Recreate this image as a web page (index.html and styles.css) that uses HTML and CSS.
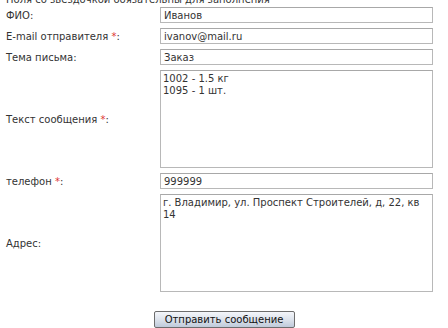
FILE: index.html
```html
<!DOCTYPE html>
<html>
<head>
	<meta charset="UTF-8">
	<title>Обратная связь</title>
	<link rel="stylesheet" href="styles.css">
</head>
<body>
	<div class="container">
		<p class="note">Поля со звездочкой обязательны для заполнения</p>

		<form class="form">
			<label class="label" for="fio">ФИО:</label>
			<input class="field" type="text" id="fio" value="Иванов">

			<label class="label" for="email">E-mail отправителя <span class="req">*</span>:</label>
			<input class="field" type="text" id="email" value="ivanov@mail.ru">

			<label class="label" for="subj">Тема письма:</label>
			<input class="field" type="text" id="subj" value="Заказ">

			<label class="label" for="msg">Текст сообщения <span class="req">*</span>:</label>
			<textarea class="field area" id="msg">1002 - 1.5 кг
1095 - 1 шт.</textarea>

			<label class="label" for="phone">телефон <span class="req">*</span>:</label>
			<input class="field" type="text" id="phone" value="999999">

			<label class="label" for="addr">Адрес:</label>
			<textarea class="field area" id="addr">г. Владимир, ул. Проспект Строителей, д, 22, кв 14</textarea>
		</form>

		<div class="actions">
			<button class="send" type="button">Отправить сообщение</button>
		</div>
	</div>
</body>
</html>
```

FILE: styles.css
```css
body{
	margin:0;
	background:#fff;
	font-family:"DejaVu Sans", Verdana, sans-serif;
	font-size:10px;
	color:#222;
}
.container{
	width:448px;
	padding:0 6px;
	box-sizing:border-box;
}
.note{
	margin:-6px 0 0;
	line-height:12px;
	color:#333;
}
.form{
	display:grid;
	grid-template-columns:154px 273px;
	row-gap:5px;
	align-items:center;
	margin-top:1px;
}
.label{
	color:#333;
}
.req{
	color:#d33;
}
.field{
	box-sizing:border-box;
	width:273px;
	height:16px;
	margin:0;
	padding:0 3px;
	border:1px solid #b8b8b8;
	border-top-color:#a8a8a8;
	font-family:"DejaVu Sans", Verdana, sans-serif;
	font-size:10px;
	color:#333;
	background:#fff;
}
.area{
	height:98px;
	padding:2px 2px;
	line-height:12px;
	resize:none;
	overflow:hidden;
}
.actions{
	display:flex;
	justify-content:center;
	margin-top:19px;
}
.send{
	width:141px;
	height:17px;
	padding:0;
	border:1px solid #6d6d6d;
	border-radius:2px;
	background:linear-gradient(#f4f6fa, #dde3ec 50%, #bfcada);
	font-family:"DejaVu Sans", Verdana, sans-serif;
	font-size:10px;
	color:#111;
}
```
